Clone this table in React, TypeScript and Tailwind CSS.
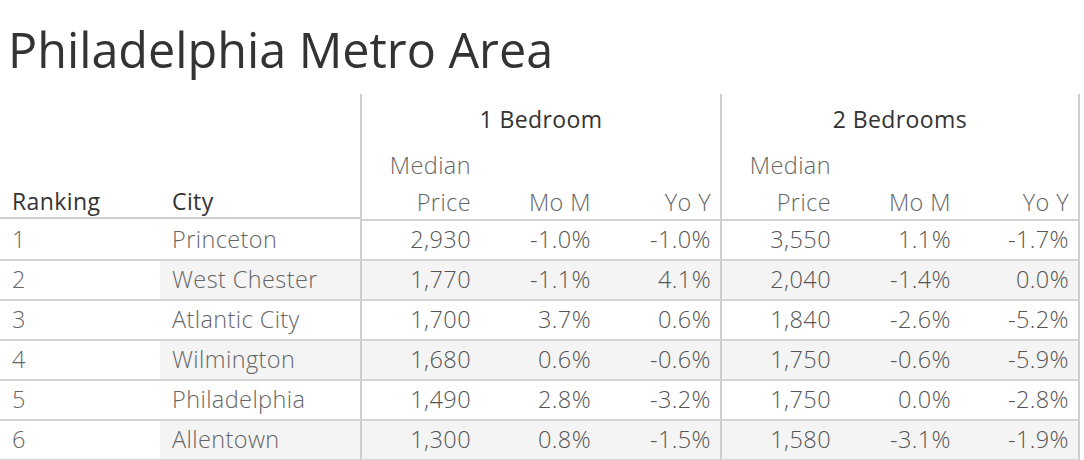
import React from "react";

const rows = [
  ["1", "Princeton", "2,930", "-1.0%", "-1.0%", "3,550", "1.1%", "-1.7%"],
  ["2", "West Chester", "1,770", "-1.1%", "4.1%", "2,040", "-1.4%", "0.0%"],
  ["3", "Atlantic City", "1,700", "3.7%", "0.6%", "1,840", "-2.6%", "-5.2%"],
  ["4", "Wilmington", "1,680", "0.6%", "-0.6%", "1,750", "-0.6%", "-5.9%"],
  ["5", "Philadelphia", "1,490", "2.8%", "-3.2%", "1,750", "0.0%", "-2.8%"],
  ["6", "Allentown", "1,300", "0.8%", "-1.5%", "1,580", "-3.1%", "-1.9%"],
];

function SubHead({ two, label, border }: { two?: boolean; label: string; border?: string }) {
  return (
    <div className={`flex flex-col justify-end items-end pr-[9px] border-b-2 border-[#d4d4d4] ${border ?? ""}`}>
      {two && <div className="h-[42px] flex items-center">Median</div>}
      <div className="h-[32px] flex items-center">{label}</div>
    </div>
  );
}

export default function App() {
  return (
    <div
      className="w-[1084px] h-[460px] bg-white overflow-hidden"
      style={{ fontFamily: '"Open Sans", "Noto Sans", sans-serif' }}
    >
      <div className="h-[94px] pl-[8px] pt-[17px] text-[48.5px] leading-[64px] text-[#333]">
        Philadelphia Metro Area
      </div>
      <div className="grid grid-cols-[160px_200px_repeat(6,120px)] w-[1082px] text-[23.5px] tracking-[0.4px]">
        {/* header */}
        <div className="row-span-2 h-[125px] flex items-end pl-[12px] border-b-2 border-[#cfcfcf] text-[#333] text-[23px]">
          <div className="h-[32px] flex items-center">Ranking</div>
        </div>
        <div className="row-span-2 h-[125px] flex items-end pl-[12px] border-b-2 border-[#cfcfcf] text-[#333] text-[23px]">
          <div className="h-[32px] flex items-center">City</div>
        </div>
        <div className="col-span-3 h-[51px] flex items-center justify-center border-l-2 border-[#cfcfcf] text-[#333] text-[23px]">
          1 Bedroom
        </div>
        <div className="col-span-3 h-[51px] flex items-center justify-center border-l-2 border-r-2 border-[#cfcfcf] text-[#333] text-[23px]">
          2 Bedrooms
        </div>
        <div className="contents font-light text-[#666]">
          <SubHead two label="Price" border="border-l-2 border-l-[#cfcfcf]" />
          <SubHead label="Mo M" />
          <SubHead label="Yo Y" />
          <SubHead two label="Price" border="border-l-2 border-l-[#cfcfcf]" />
          <SubHead label="Mo M" />
          <SubHead label="Yo Y" border="border-r-2 border-r-[#cfcfcf]" />
        </div>
        {rows.map((r, i) => {
          const shade = i % 2 === 1 ? "bg-[#f4f4f4]" : "bg-white";
          return (
            <React.Fragment key={i}>
              <div className="h-[40px] flex items-center pl-[12px] border-b-2 border-[#d4d4d4] font-light text-[#666]">
                {r[0]}
              </div>
              <div className={`h-[40px] flex items-center pl-[12px] border-b-2 border-[#d4d4d4] font-light text-[#666] ${shade}`}>
                {r[1]}
              </div>
              {r.slice(2).map((v, j) => (
                <div
                  key={j}
                  className={`h-[40px] flex items-center justify-end pr-[9px] border-b-2 border-b-[#d4d4d4] font-light text-[#555] ${shade} ${
                    j === 0 || j === 3 ? "border-l-2 border-l-[#cfcfcf]" : ""
                  } ${j === 5 ? "border-r-2 border-r-[#cfcfcf]" : ""}`}
                >
                  {v}
                </div>
              ))}
            </React.Fragment>
          );
        })}
      </div>
    </div>
  );
}
